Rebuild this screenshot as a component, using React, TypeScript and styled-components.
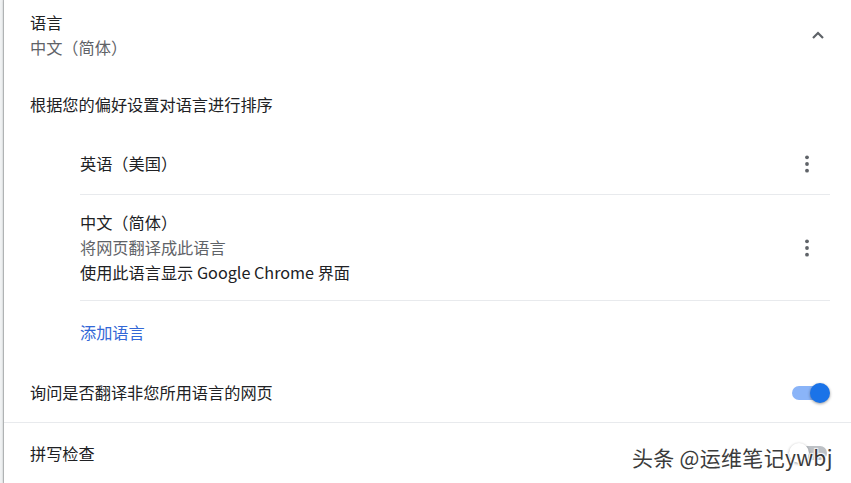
import React from "react";
import styled, { createGlobalStyle } from "styled-components";

const Global = createGlobalStyle`
  html, body { margin: 0; padding: 0; background: #f1f3f4; }
  body { font-family: "Noto Sans CJK SC", Roboto, "Noto Sans", sans-serif; }
  #root { width: 851px; height: 483px; overflow: hidden; }
`;

const Page = styled.div`
  position: relative;
  width: 851px;
  height: 483px;
  padding-left: 4px;
  box-sizing: border-box;
  overflow: hidden;
`;

const Card = styled.div`
  background: #fff;
  height: 100%;
  box-shadow: -1px 0 1px rgba(60, 64, 67, 0.3), -1px 0 3px rgba(60, 64, 67, 0.12);
  font-size: 16.2px;
  color: #202124;
  display: flex;
  flex-direction: column;
`;

const Header = styled.div`
  display: flex;
  align-items: center;
  justify-content: space-between;
  padding: 10px 21px 10px 26px;
  min-height: 50px;
`;

const TextBlock = styled.div`
  display: flex;
  flex-direction: column;
`;

const Line = styled.div<{ $tone?: "primary" | "secondary" | "link" }>`
  line-height: 25px;
  white-space: nowrap;
  color: ${(p) =>
    p.$tone === "secondary" ? "#5f6368" : p.$tone === "link" ? "#3367d6" : "#202124"};
`;

const IconButton = styled.div`
  width: 24px;
  height: 24px;
  display: flex;
  align-items: center;
  justify-content: center;
  color: #5f6368;
`;

const SectionLabel = styled.div`
  padding: 22px 26px 0 26px;
  line-height: 25px;
  height: 25px;
`;

const List = styled.div`
  margin: 16px 21px 0 76px;
  display: flex;
  flex-direction: column;
`;

const Item = styled.div<{ $tall?: boolean; $divider?: boolean }>`
  display: flex;
  align-items: center;
  justify-content: space-between;
  min-height: ${(p) => (p.$tall ? "106px" : "62px")};
  border-bottom: ${(p) => (p.$divider ? "1px solid #e8eaed" : "none")};
  box-sizing: border-box;
  padding-right: 20px;
`;

const ToggleRow = styled.div<{ $divider?: boolean }>`
  display: flex;
  align-items: center;
  justify-content: space-between;
  height: 60px;
  padding: 0 21px 0 26px;
  border-bottom: ${(p) => (p.$divider ? "1px solid #e8eaed" : "none")};
  box-sizing: border-box;
`;

const Track = styled.div<{ $on?: boolean }>`
  position: relative;
  width: 35px;
  height: 14px;
  border-radius: 7px;
  background: ${(p) => (p.$on ? "#8ab4f8" : "#bdc1c6")};
  margin-right: 3px;
`;

const Knob = styled.div<{ $on?: boolean }>`
  position: absolute;
  top: -3px;
  left: ${(p) => (p.$on ? "18px" : "-3px")};
  width: 20px;
  height: 20px;
  border-radius: 50%;
  background: ${(p) => (p.$on ? "#1a73e8" : "#ffffff")};
  box-shadow: 0 1px 3px rgba(0, 0, 0, 0.4);
`;

const Watermark = styled.div`
  position: absolute;
  left: 632px;
  top: 443px;
  font-size: 21px;
  line-height: 28px;
  color: #2b2b2b;
  letter-spacing: 0.3px;
  white-space: nowrap;
  text-shadow: 1px 1px 1px #fff, -1px -1px 1px #fff, 1px -1px 1px #fff, -1px 1px 1px #fff;
  opacity: 0.92;
`;

const Chevron = () => (
  <svg width="14" height="10" viewBox="0 0 14 10">
    <path d="M2 8 L7 3 L12 8" fill="none" stroke="#5f6368" strokeWidth="2.2" />
  </svg>
);

const Kebab = () => (
  <svg width="6" height="20" viewBox="0 0 6 20">
    <circle cx="3" cy="3.3" r="1.9" fill="#5f6368" />
    <circle cx="3" cy="10" r="1.9" fill="#5f6368" />
    <circle cx="3" cy="16.7" r="1.9" fill="#5f6368" />
  </svg>
);

const Toggle = ({ on }: { on?: boolean }) => (
  <Track $on={on}>
    <Knob $on={on} />
  </Track>
);

export default function App() {
  return (
    <Page>
      <Global />
      <Card>
        <Header>
          <TextBlock>
            <Line>语言</Line>
            <Line $tone="secondary">中文（简体）</Line>
          </TextBlock>
          <IconButton>
            <Chevron />
          </IconButton>
        </Header>
        <SectionLabel>根据您的偏好设置对语言进行排序</SectionLabel>
        <List>
          <Item $divider>
            <Line>英语（美国）</Line>
            <Kebab />
          </Item>
          <Item $tall $divider>
            <TextBlock>
              <Line>中文（简体）</Line>
              <Line $tone="secondary">将网页翻译成此语言</Line>
              <Line>使用此语言显示 Google Chrome 界面</Line>
            </TextBlock>
            <Kebab />
          </Item>
          <Item>
            <Line $tone="link">添加语言</Line>
          </Item>
        </List>
        <ToggleRow $divider>
          <Line>询问是否翻译非您所用语言的网页</Line>
          <Toggle on />
        </ToggleRow>
        <ToggleRow>
          <Line>拼写检查</Line>
          <Toggle />
        </ToggleRow>
      </Card>
      <Watermark>头条 @运维笔记ywbj</Watermark>
    </Page>
  );
}
